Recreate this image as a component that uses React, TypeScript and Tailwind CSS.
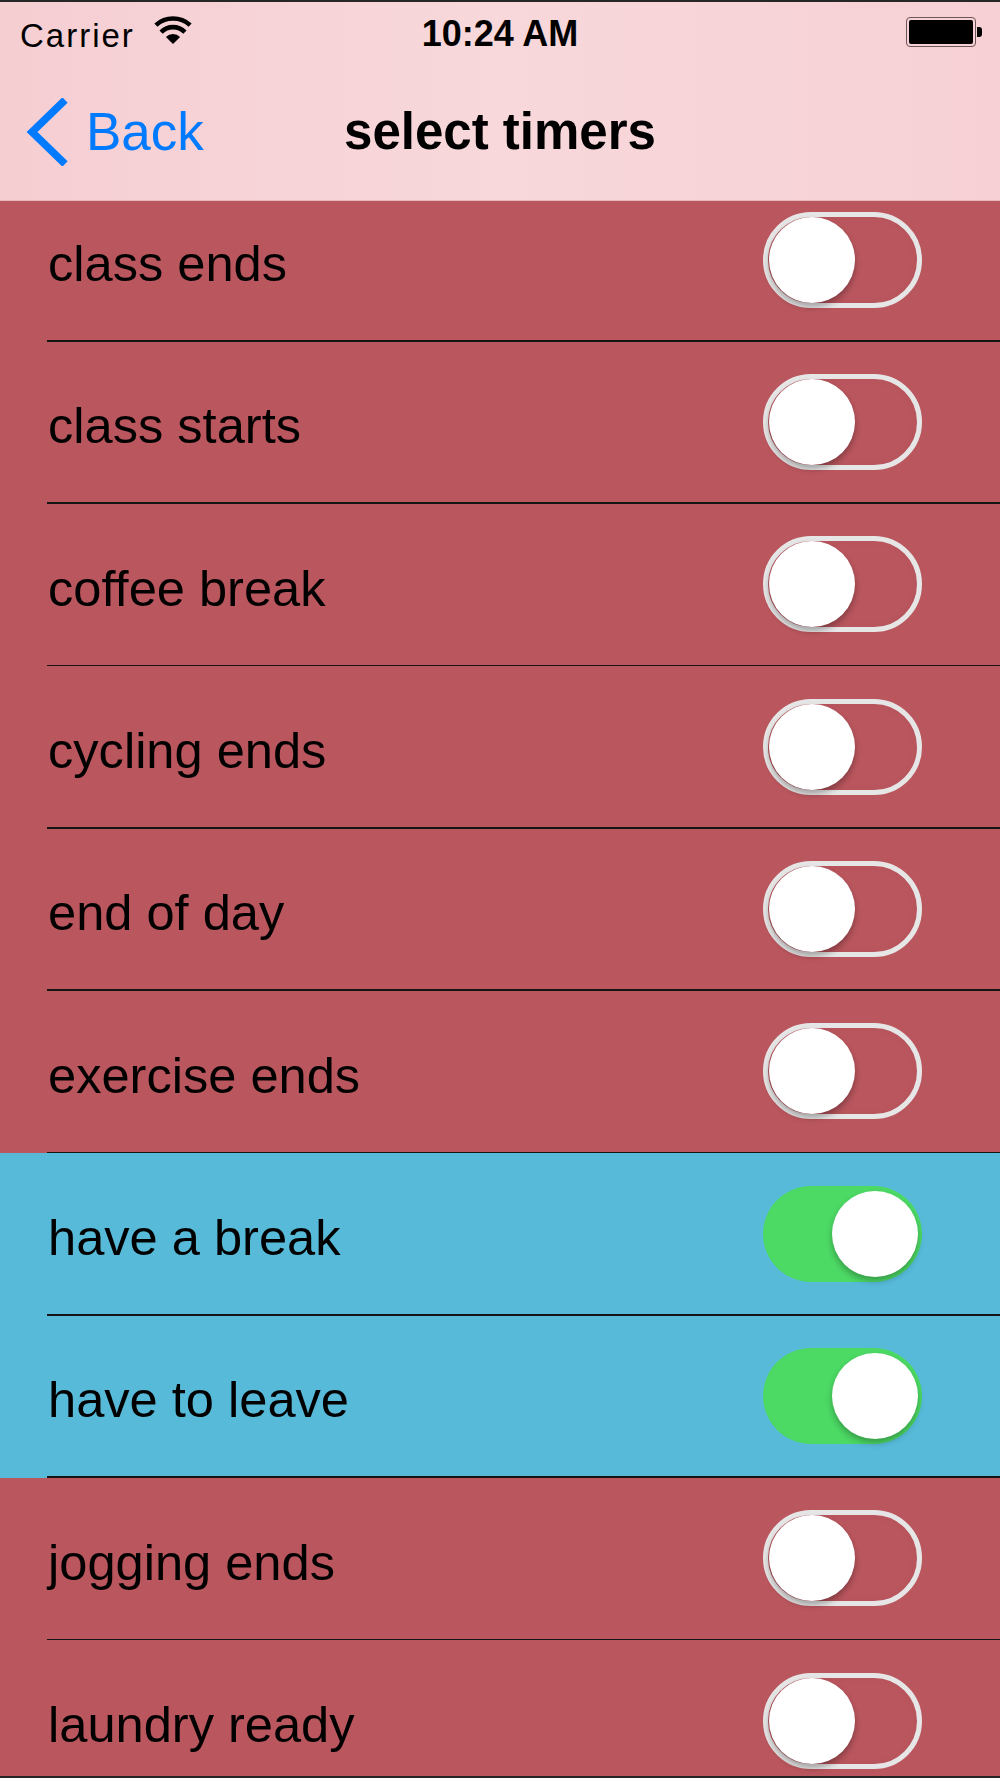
import React, { useState } from 'react';

type Timer = { name: string; on: boolean };

const initialTimers: Timer[] = [
  { name: 'class ends', on: false },
  { name: 'class starts', on: false },
  { name: 'coffee break', on: false },
  { name: 'cycling ends', on: false },
  { name: 'end of day', on: false },
  { name: 'exercise ends', on: false },
  { name: 'have a break', on: true },
  { name: 'have to leave', on: true },
  { name: 'jogging ends', on: false },
  { name: 'laundry ready', on: false },
];

const WifiIcon: React.FC = () => (
  <svg width="40" height="30" viewBox="0 0 40 30" className="block">
    <path d="M20 29 L12.9 21.9 A10 10 0 0 1 27.1 21.9 Z" fill="#000" />
    <path d="M8.1 17.1 A16.8 16.8 0 0 1 31.9 17.1" fill="none" stroke="#000" strokeWidth="4.6" />
    <path d="M2.9 10.1 A25.5 25.5 0 0 1 37.1 10.1" fill="none" stroke="#000" strokeWidth="4.6" />
  </svg>
);

const Battery: React.FC = () => (
  <div className="flex items-center">
    <div className="w-[70px] h-[30px] rounded-[4px] border-[1.5px] border-[#6d5659] p-[2px]">
      <div className="w-full h-full rounded-[2px] bg-black" />
    </div>
    <div className="w-[5px] h-[10px] rounded-r-[3px] bg-black ml-[1px]" />
  </div>
);

const Switch: React.FC<{ on: boolean; onToggle: () => void }> = ({ on, onToggle }) => {
  if (on) {
    return (
      <button
        onClick={onToggle}
        className="relative w-[159px] h-[96px] rounded-full bg-[#4cd964] shrink-0"
      >
        <span className="absolute right-[4.5px] top-[5px] w-[86px] h-[86px] rounded-full bg-white shadow-[0_4px_6px_rgba(0,0,0,0.28)]" />
      </button>
    );
  }
  return (
    <button
      onClick={onToggle}
      className="relative w-[159px] h-[96px] rounded-full border-[5px] border-[#e6e6e6] shrink-0 shadow-[inset_0_0_10px_rgba(0,0,0,0.04)]"
    >
      <span className="absolute left-[1px] top-0 w-[86px] h-[86px] rounded-full bg-white shadow-[0_4px_6px_rgba(0,0,0,0.3)]" />
    </button>
  );
};

export default function App() {
  const [timers, setTimers] = useState<Timer[]>(initialTimers);

  const toggle = (i: number) => {
    setTimers(prev => prev.map((t, idx) => (idx === i ? { ...t, on: !t.on } : t)));
  };

  return (
    <div className="w-[1000px] h-[1778px] overflow-hidden flex flex-col border-y-2 border-[#262626] bg-[#ba565e] font-['Liberation_Sans',Arial,sans-serif] text-black">
      <header className="relative z-10 h-[199px] shrink-0 bg-gradient-to-r from-[#f5ced2] via-[#f8d8db] to-[#f6d0d4] border-b border-[#e7b9be]">
        {/* status bar */}
        <div className="h-[60.5px] grid grid-cols-[1fr_auto_1fr] items-center">
          <div className="flex items-center pl-[20px]">
            <span className="text-[33px] leading-none tracking-[2px] mt-[6px]">Carrier</span>
            <span className="ml-[18px] -mt-[4px]">
              <WifiIcon />
            </span>
          </div>
          <span className="text-[36px] font-bold leading-none mt-[4px]">10:24 AM</span>
          <div className="flex justify-end pr-[18px] -mt-[1px]">
            <Battery />
          </div>
        </div>

        {/* nav bar */}
        <div className="h-[137.5px] grid grid-cols-[1fr_auto_1fr] items-center">
          <button className="flex items-center pl-[26px] text-[#007aff]">
            <svg width="42" height="68" viewBox="0 0 42 68" className="block mt-[2px]">
              <path d="M39 2 L6 34 L39 66" fill="none" stroke="#007aff" strokeWidth="7.5" />
            </svg>
            <span className="ml-[18px] text-[53px] leading-none mt-[1px]">Back</span>
          </button>
          <h1 className="text-[51px] font-bold leading-none mt-[1px]">select timers</h1>
          <div />
        </div>
      </header>

      <div className="relative z-0 -mt-[21.8px]">
        {timers.map((t, i) => (
          <div
            key={t.name}
            className={`h-[162.35px] flex flex-col ${t.on ? 'bg-[#57bad9]' : 'bg-[#ba565e]'}`}
          >
            <div className="flex-1 flex items-center justify-between pl-[48px] pr-[78px]">
              <span className="text-[50.6px] leading-none mt-[9px]">{t.name}</span>
              <Switch on={t.on} onToggle={() => toggle(i)} />
            </div>
            <div className="h-[1.5px] ml-[47px] bg-[#141414]" />
          </div>
        ))}
      </div>
    </div>
  );
}
